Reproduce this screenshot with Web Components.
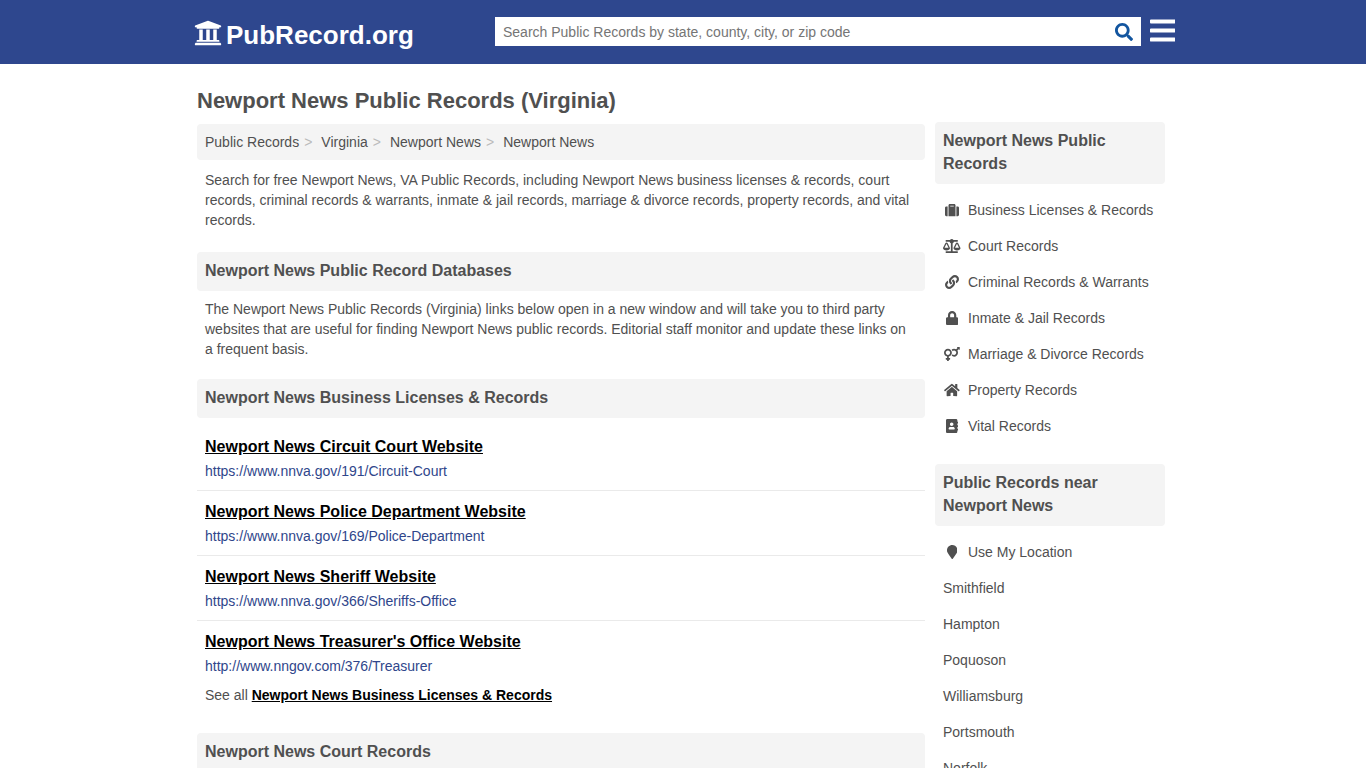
<!DOCTYPE html>
<html lang="en">
<head>
<meta charset="utf-8">
<meta name="viewport" content="width=device-width, initial-scale=1">
<title>Newport News Public Records (Virginia)</title>
<style>
  html { --brand: #2e478e; --panel: #f4f4f4; --heading: #505050; --text: #505050; }
  body { margin: 0; background: #fff; color: var(--text); font: 14px/20px "Liberation Sans", Arial, sans-serif; }
</style>
</head>
<body>
<records-page></records-page>

<script>
const ICONS = {
  university: ['0 0 512 512', 'M496 128v16a8 8 0 0 1-8 8h-24v12c0 6.627-5.373 12-12 12H60c-6.627 0-12-5.373-12-12v-12H24a8 8 0 0 1-8-8v-16a8 8 0 0 1 4.941-7.392l232-88a7.996 7.996 0 0 1 6.118 0l232 88A8 8 0 0 1 496 128zm-24 304H40c-13.255 0-24 10.745-24 24v16a8 8 0 0 0 8 8h464a8 8 0 0 0 8-8v-16c0-13.255-10.745-24-24-24zM96 192v192H60c-6.627 0-12 5.373-12 12v20h416v-20c0-6.627-5.373-12-12-12h-36V192h-64v192h-64V192h-64v192h-64V192H96z'],
  search: ['0 0 512 512', 'M505 442.7L405.3 343c-4.5-4.5-10.6-7-17-7H372c27.6-35.3 44-79.7 44-128C416 93.1 322.9 0 208 0S0 93.1 0 208s93.1 208 208 208c48.3 0 92.7-16.4 128-44v16.3c0 6.4 2.5 12.5 7 17l99.7 99.7c9.4 9.4 24.6 9.4 33.9 0l28.3-28.3c9.4-9.4 9.4-24.6.1-34zM208 336c-70.7 0-128-57.2-128-128 0-70.7 57.2-128 128-128 70.7 0 128 57.2 128 128 0 70.7-57.2 128-128 128z'],
  bars: ['0 0 448 512', 'M16 132h416c8.837 0 16-7.163 16-16V76c0-8.837-7.163-16-16-16H16C7.163 60 0 67.163 0 76v40c0 8.837 7.163 16 16 16zm0 160h416c8.837 0 16-7.163 16-16v-40c0-8.837-7.163-16-16-16H16c-8.837 0-16 7.163-16 16v40c0 8.837 7.163 16 16 16zm0 160h416c8.837 0 16-7.163 16-16v-40c0-8.837-7.163-16-16-16H16c-8.837 0-16 7.163-16 16v40c0 8.837 7.163 16 16 16z'],
  suitcase: ['0 0 512 512', 'M128 480h256V80c0-26.5-21.5-48-48-48H176c-26.5 0-48 21.5-48 48v400zm64-384h128v32H192V96zm320 80v256c0 26.5-21.5 48-48 48h-48V128h48c26.5 0 48 21.5 48 48zM96 480H48c-26.5 0-48-21.5-48-48V176c0-26.5 21.5-48 48-48h48v352z'],
  scale: ['0 0 640 512', 'M256 336h-.02c0-16.18 1.34-8.73-85.05-181.51-17.65-35.29-68.19-35.36-85.87 0C-2.06 328.75.02 320.33.02 336H0c0 44.18 57.31 80 128 80s128-35.82 128-80zM128 176l72 144H56l72-144zm511.98 160c0-16.18 1.34-8.73-85.05-181.51-17.65-35.29-68.19-35.36-85.87 0-87.12 174.26-85.04 165.84-85.04 181.51H384c0 44.18 57.31 80 128 80s128-35.82 128-80h-.02zM440 320l72-144 72 144H440zm88 128H352V153.25c23.51-10.29 41.16-31.48 46.39-57.25H528c8.84 0 16-7.16 16-16V48c0-8.84-7.16-16-16-16H383.64C369.04 12.68 346.09 0 320 0s-49.04 12.68-63.64 32H112c-8.84 0-16 7.16-16 16v32c0 8.84 7.16 16 16 16h129.61c5.23 25.76 22.87 46.96 46.39 57.25V448H112c-8.84 0-16 7.16-16 16v32c0 8.84 7.16 16 16 16h416c8.84 0 16-7.16 16-16v-32c0-8.84-7.16-16-16-16z'],
  link: ['0 0 512 512', 'M326.612 185.391c59.747 59.809 58.927 155.698.36 214.59-.11.12-.24.25-.36.37l-67.2 67.2c-59.27 59.27-155.699 59.262-214.96 0-59.27-59.26-59.27-155.7 0-214.96l37.106-37.106c9.84-9.84 26.786-3.3 27.294 10.606.648 17.722 3.826 35.527 9.69 52.721 1.986 5.822.567 12.262-3.783 16.612l-13.087 13.087c-28.026 28.026-28.905 73.66-1.155 101.96 28.024 28.579 74.086 28.749 102.325.51l67.2-67.19c28.191-28.191 28.073-73.757 0-101.83-3.701-3.694-7.429-6.564-10.341-8.569a16.037 16.037 0 0 1-6.947-12.606c-.396-10.567 3.348-21.456 11.698-29.806l21.054-21.055c5.521-5.521 14.182-6.199 20.584-1.731a152.482 152.482 0 0 1 20.522 17.197zM467.547 44.449c-59.261-59.262-155.69-59.27-214.96 0l-67.2 67.2c-.12.12-.25.25-.36.37-58.566 58.892-59.387 154.781.36 214.59a152.454 152.454 0 0 0 20.521 17.196c6.402 4.468 15.064 3.789 20.584-1.731l21.054-21.055c8.35-8.35 12.094-19.239 11.698-29.806a16.037 16.037 0 0 0-6.947-12.606c-2.912-2.005-6.64-4.875-10.341-8.569-28.073-28.073-28.191-73.639 0-101.83l67.2-67.19c28.239-28.239 74.3-28.069 102.325.51 27.75 28.3 26.872 73.934-1.155 101.96l-13.087 13.087c-4.35 4.35-5.769 10.79-3.783 16.612 5.864 17.194 9.042 34.999 9.69 52.721.509 13.906 17.454 20.446 27.294 10.606l37.106-37.106c59.271-59.259 59.271-155.699.001-214.959z'],
  lock: ['0 0 448 512', 'M400 224h-24v-72C376 68.2 307.8 0 224 0S72 68.2 72 152v72H48c-26.5 0-48 21.5-48 48v192c0 26.5 21.5 48 48 48h352c26.5 0 48-21.5 48-48V272c0-26.5-21.5-48-48-48zm-104 0H152v-72c0-39.7 32.3-72 72-72s72 32.3 72 72v72z'],
  couple: ['0 0 576 512', 'M564 0h-79c-10.7 0-16 12.9-8.5 20.4l16.9 16.9-48.7 48.7C422.5 72.1 396.2 64 368 64c-33.7 0-64.6 11.6-89.2 30.9 14 16.7 25 36 32.1 57.1 14.5-14.8 34.7-24 57.1-24 44.1 0 80 35.9 80 80s-35.9 80-80 80c-22.3 0-42.6-9.2-57.1-24-7.1 21.1-18 40.4-32.1 57.1 24.5 19.4 55.5 30.9 89.2 30.9 79.5 0 144-64.5 144-144 0-28.2-8.1-54.5-22.1-76.7l48.7-48.7 16.9 16.9c2.4 2.4 5.4 3.5 8.4 3.5 6.2 0 12.1-4.8 12.1-12V12c0-6.6-5.4-12-12-12zM144 64C64.5 64 0 128.5 0 208c0 68.5 47.9 125.9 112 140.4V400H76c-6.6 0-12 5.4-12 12v40c0 6.6 5.4 12 12 12h36v36c0 6.6 5.4 12 12 12h40c6.6 0 12-5.4 12-12v-36h36c6.6 0 12-5.4 12-12v-40c0-6.6-5.4-12-12-12h-36v-51.6c64.1-14.6 112-71.9 112-140.4 0-79.5-64.5-144-144-144zm0 224c-44.1 0-80-35.9-80-80s35.9-80 80-80 80 35.9 80 80-35.9 80-80 80z'],
  home: ['0 0 576 512', 'M280.37 148.26L96 300.11V464a16 16 0 0 0 16 16l112.06-.29a16 16 0 0 0 15.92-16V368a16 16 0 0 1 16-16h64a16 16 0 0 1 16 16v95.64a16 16 0 0 0 16 16.05L464 480a16 16 0 0 0 16-16V300L295.67 148.26a12.19 12.19 0 0 0-15.3 0zM571.6 251.47L488 182.56V44.05a12 12 0 0 0-12-12h-56a12 12 0 0 0-12 12v72.61L318.47 43a48 48 0 0 0-61 0L4.34 251.47a12 12 0 0 0-1.6 16.9l25.5 31A12 12 0 0 0 45.15 301l235.22-193.74a12.19 12.19 0 0 1 15.3 0L530.9 301a12 12 0 0 0 16.9-1.6l25.5-31a12 12 0 0 0-1.7-16.93z'],
  book: ['0 0 448 512', 'M436 160c6.6 0 12-5.4 12-12v-40c0-6.6-5.4-12-12-12h-20V48c0-26.5-21.5-48-48-48H48C21.5 0 0 21.5 0 48v416c0 26.5 21.5 48 48 48h320c26.5 0 48-21.5 48-48v-48h20c6.6 0 12-5.4 12-12v-40c0-6.6-5.4-12-12-12h-20v-64h20c6.6 0 12-5.4 12-12v-40c0-6.6-5.4-12-12-12h-20v-64h20zm-228-32c35.3 0 64 28.7 64 64s-28.7 64-64 64-64-28.7-64-64 28.7-64 64-64zm112 236.8c0 10.6-10 19.2-22.4 19.2H118.4C106 384 96 375.4 96 364.8v-19.2c0-31.8 30.1-57.6 67.2-57.6h5c12.3 5.1 25.7 8 39.8 8s27.6-2.9 39.8-8h5c37.1 0 67.2 25.8 67.2 57.6v19.2z'],
  marker: ['0 0 384 512', 'M172.268 501.67C26.97 291.031 0 269.413 0 192 0 85.961 85.961 0 192 0s192 85.961 192 192c0 77.413-26.97 99.031-172.268 309.67-9.535 13.774-29.93 13.773-39.464 0z']
};

function define(name, markup, setup) {
  const template = document.createElement('template');
  template.innerHTML = markup;
  customElements.define(name, class extends HTMLElement {
    constructor() {
      super();
      this.attachShadow({ mode: 'open' }).append(template.content.cloneNode(true));
    }
    connectedCallback() { if (setup) setup(this, this.shadowRoot); }
  });
}

define('ui-icon', `
  <style>
    :host { display: inline-flex; justify-content: center; flex: none; height: var(--icon-size, 14px); }
    svg { display: block; height: 100%; fill: currentColor; }
  </style>
  <svg aria-hidden="true"><path></path></svg>`,
  (host, root) => {
    const [box, path] = ICONS[host.getAttribute('name')];
    root.querySelector('svg').setAttribute('viewBox', box);
    root.querySelector('path').setAttribute('d', path);
  });

define('site-header', `
  <style>
    :host { display: block; background: var(--brand); color: #fff; }
    .bar { display: flex; align-items: flex-start; box-sizing: border-box; max-width: 984px; min-height: 64px; margin: 0 auto; padding: 17px 0 0 4px; }
    .logo { display: flex; align-items: center; gap: 4px; flex: 0 0 300px; margin-top: 3px; color: inherit; font-size: 26px; font-weight: bold; line-height: 30px; text-decoration: none; --icon-size: 28px; }
    .logo ui-icon { margin: -4px 0 0 -1px; }
    form { flex: 1; display: flex; min-width: 0; height: 29px; background: #fff; }
    input { flex: 1; min-width: 0; border: 0; padding: 0 8px; background: transparent; color: #444; font: inherit; outline-offset: -2px; }
    input::placeholder { color: #757575; opacity: 1; }
    button { display: flex; align-items: center; justify-content: center; border: 0; padding: 0; background: none; cursor: pointer; }
    form button { width: 34px; color: #12559f; --icon-size: 18px; }
    .menu { margin: -1px 0 0 9px; color: #fff; --icon-size: 29px; }
  </style>
  <header class="bar">
    <a class="logo" href="#"><ui-icon name="university"></ui-icon><span>PubRecord.org</span></a>
    <form role="search">
      <input type="text" aria-label="Search Public Records" placeholder="Search Public Records by state, county, city, or zip code">
      <button type="submit" aria-label="Search"><ui-icon name="search"></ui-icon></button>
    </form>
    <button class="menu" type="button" aria-label="Menu"><ui-icon name="bars"></ui-icon></button>
  </header>`);

define('section-title', `
  <style>
    :host { display: block; }
    h2 { margin: 0; padding: 7px 8px 9px; border-radius: 4px; background: var(--panel); color: var(--heading); font-size: 16px; line-height: 23px; }
  </style>
  <h2><slot></slot></h2>`);

define('bread-crumbs', `
  <style>
    :host { display: block; padding: 8px; border-radius: 4px; background: var(--panel); }
    nav { display: flex; flex-wrap: wrap; }
    ::slotted(a) { color: inherit; text-decoration: none; }
    ::slotted(a:not(:last-child))::after { content: ">"; padding: 0 9px 0 5px; color: #bbb; }
  </style>
  <nav aria-label="Breadcrumb"><slot></slot></nav>`);

define('record-link', `
  <style>
    :host { display: block; padding: 9px 8px; border-bottom: 1px solid #eaeaea; }
    :host(:last-of-type) { border-bottom: 0; }
    a { color: #000; font-size: 16px; font-weight: bold; line-height: 24px; }
    div { margin-top: 2px; color: #2f468b; }
  </style>
  <a><slot></slot></a>
  <div></div>`,
  (host, root) => {
    root.querySelector('a').href = host.getAttribute('url');
    root.querySelector('div').textContent = host.getAttribute('url');
  });

define('side-link', `
  <style>
    :host { display: block; }
    a { display: flex; align-items: center; gap: 7px; padding: 8px; color: inherit; text-decoration: none; }
    ui-icon { width: 18px; }
  </style>
  <a href="#"><slot></slot></a>`,
  (host, root) => {
    const name = host.getAttribute('icon');
    if (!name || root.querySelector('ui-icon')) return;
    const icon = document.createElement('ui-icon');
    icon.setAttribute('name', name);
    root.querySelector('a').prepend(icon);
  });

define('side-panel', `
  <style>
    :host { display: block; margin-bottom: 20px; }
    nav { padding-top: 8px; }
  </style>
  <section-title><slot name="title"></slot></section-title>
  <nav><slot></slot></nav>`);

define('records-page', `
  <style>
    :host { display: block; }
    .layout { display: grid; grid-template-columns: minmax(0, 1fr) 230px; gap: 10px; box-sizing: border-box; max-width: 980px; margin: 0 auto; padding: 0 8px 40px 4px; }
    h1 { margin: 0; padding: 22px 0 8px; color: var(--heading); font-size: 22px; line-height: 30px; }
    p { margin: 0; padding: 8px 8px 20px; }
    .intro { padding: 10px 8px 22px; }
    .list { padding-top: 8px; }
    .all { padding: 0 8px 28px; }
    .all a { color: #000; font-weight: bold; }
    aside { padding-top: 58px; }
    @media (max-width: 700px) { .layout { grid-template-columns: minmax(0, 1fr); } aside { padding-top: 0; } }
  </style>
  <site-header></site-header>
  <div class="layout">
    <main>
      <h1>Newport News Public Records (Virginia)</h1>
      <bread-crumbs><a href="#">Public Records</a><a href="#">Virginia</a><a href="#">Newport News</a><a href="#">Newport News</a></bread-crumbs>
      <p class="intro">Search for free Newport News, VA Public Records, including Newport News business licenses &amp; records, court records, criminal records &amp; warrants, inmate &amp; jail records, marriage &amp; divorce records, property records, and vital records.</p>
      <section-title>Newport News Public Record Databases</section-title>
      <p>The Newport News Public Records (Virginia) links below open in a new window and will take you to third party websites that are useful for finding Newport News public records. Editorial staff monitor and update these links on a frequent basis.</p>
      <section-title>Newport News Business Licenses &amp; Records</section-title>
      <div class="list">
        <record-link url="https://www.nnva.gov/191/Circuit-Court">Newport News Circuit Court Website</record-link>
        <record-link url="https://www.nnva.gov/169/Police-Department">Newport News Police Department Website</record-link>
        <record-link url="https://www.nnva.gov/366/Sheriffs-Office">Newport News Sheriff Website</record-link>
        <record-link url="http://www.nngov.com/376/Treasurer">Newport News Treasurer's Office Website</record-link>
      </div>
      <p class="all">See all <a href="#">Newport News Business Licenses &amp; Records</a></p>
      <section-title>Newport News Court Records</section-title>
    </main>
    <aside>
      <side-panel>
        <span slot="title">Newport News Public Records</span>
        <side-link icon="suitcase">Business Licenses &amp; Records</side-link>
        <side-link icon="scale">Court Records</side-link>
        <side-link icon="link">Criminal Records &amp; Warrants</side-link>
        <side-link icon="lock">Inmate &amp; Jail Records</side-link>
        <side-link icon="couple">Marriage &amp; Divorce Records</side-link>
        <side-link icon="home">Property Records</side-link>
        <side-link icon="book">Vital Records</side-link>
      </side-panel>
      <side-panel>
        <span slot="title">Public Records near Newport News</span>
        <side-link icon="marker">Use My Location</side-link>
        <side-link>Smithfield</side-link>
        <side-link>Hampton</side-link>
        <side-link>Poquoson</side-link>
        <side-link>Williamsburg</side-link>
        <side-link>Portsmouth</side-link>
        <side-link>Norfolk</side-link>
      </side-panel>
    </aside>
  </div>`);
</script>
</body>
</html>
